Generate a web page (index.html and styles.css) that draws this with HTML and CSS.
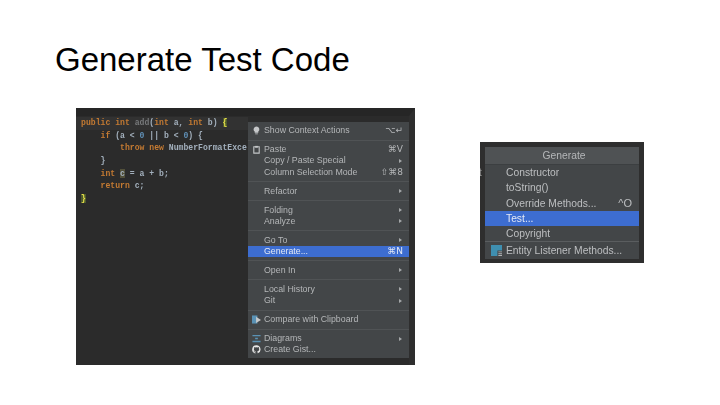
FILE: index.html
```html
<!DOCTYPE html>
<html lang="en">
<head>
<meta charset="utf-8">
<title>Generate Test Code</title>
<link rel="stylesheet" href="styles.css">
</head>
<body>
<main class="slide">
  <h1 class="title">Generate Test Code</h1>
  <div class="shots">
    <section class="shot ide">
      <div class="code">
        <div class="line current"><span class="kw">public int</span> <span class="dim">add</span>(<span class="kw">int</span> a, <span class="kw">int</span> b) <span class="brace">{</span></div>
        <div class="line in1"><span class="kw">if</span> (a &lt; <span class="num">0</span> || b &lt; <span class="num">0</span>) {</div>
        <div class="line in2"><span class="kw">throw new</span> NumberFormatExce</div>
        <div class="line in1">}</div>
        <div class="line in1"><span class="kw">int</span> <span class="mark">c</span> = a + b;</div>
        <div class="line in1"><span class="kw">return</span> c;</div>
        <div class="line"><span class="brace">}</span></div>
      </div>
      <nav class="menu">
        <div class="item"><svg class="icon" viewBox="0 0 10 10"><path class="fill-light" d="M5 .5a3.2 3.2 0 0 0-2 5.7V7.500h4V6.200A3.200 3.200 0 0 0 5 .5zM3.500 8.200h3v1h-3z"/></svg><span class="label">Show Context Actions</span><span class="key">⌥↵</span></div>
        <div class="sep"></div>
        <div class="item"><svg class="icon" viewBox="0 0 10 10"><path class="stroke-light" d="M2 2h6v7H2z"/><path class="fill-light" d="M3.500 1h3v2h-3z"/></svg><span class="label">Paste</span><span class="key">⌘V</span></div>
        <div class="item"><span class="label">Copy / Paste Special</span><span class="arrow"></span></div>
        <div class="item"><span class="label">Column Selection Mode</span><span class="key">⇧⌘8</span></div>
        <div class="sep"></div>
        <div class="item"><span class="label">Refactor</span><span class="arrow"></span></div>
        <div class="sep"></div>
        <div class="item"><span class="label">Folding</span><span class="arrow"></span></div>
        <div class="item"><span class="label">Analyze</span><span class="arrow"></span></div>
        <div class="sep"></div>
        <div class="item"><span class="label">Go To</span><span class="arrow"></span></div>
        <div class="item active"><span class="label">Generate...</span><span class="key">⌘N</span></div>
        <div class="sep"></div>
        <div class="item"><span class="label">Open In</span><span class="arrow"></span></div>
        <div class="sep"></div>
        <div class="item"><span class="label">Local History</span><span class="arrow"></span></div>
        <div class="item"><span class="label">Git</span><span class="arrow"></span></div>
        <div class="sep"></div>
        <div class="item"><svg class="icon" viewBox="0 0 10 10"><path class="fill-blue" d="M0 .5h6v9H0z"/><path class="fill-light" d="M4.500 2 10 5.500 4.500 9z"/></svg><span class="label">Compare with Clipboard</span></div>
        <div class="sep"></div>
        <div class="item"><svg class="icon" viewBox="0 0 10 10"><path class="fill-blue" d="M.5 1h9v1.600h-9zM.5 7.600h9v1.600h-9zM3.500 4.300h3v1.600h-3z"/></svg><span class="label">Diagrams</span><span class="arrow"></span></div>
        <div class="item"><svg class="icon" viewBox="0 0 10 10"><path class="fill-white" d="M5 .4a4.600 4.600 0 0 0-1.500 9c.2 0 .3-.1.3-.3V8c-1.200.3-1.500-.5-1.500-.5-.2-.5-.5-.7-.5-.7-.4-.3 0-.3 0-.3.5 0 .7.5.7.5.4.7 1.100.5 1.400.4 0-.3.200-.5.300-.6-1-.1-2.100-.5-2.100-2.200 0-.5.200-.9.500-1.200-.1-.100-.2-.6 0-1.200 0 0 .4-.1 1.300.5a4.400 4.400 0 0 1 2.300 0c.9-.6 1.300-.5 1.300-.5.200.6.100 1.100 0 1.200.3.300.5.700.5 1.200 0 1.700-1.100 2.100-2.100 2.200.2.100.3.400.3.800v1.400c0 .2.100.3.300.3A4.600 4.600 0 0 0 5 .4z"/></svg><span class="label">Create Gist...</span></div>
      </nav>
    </section>
    <section class="shot gen">
      <div class="edge"><span class="edge-t">t</span></div>
      <nav class="popup">
        <div class="popup-head">Generate</div>
        <div class="row">Constructor</div>
        <div class="row">toString()</div>
        <div class="row"><span class="label">Override Methods...</span><span class="row-key">^O</span></div>
        <div class="row active">Test...</div>
        <div class="row">Copyright</div>
        <div class="popup-sep"></div>
        <div class="row entity"><svg class="entity-icon" viewBox="0 0 12 12"><path class="fill-teal" d="M0 0h12v6H7v6H0z"/><path class="fill-grey" d="M8 7h4v1H8zM8 9h4v1H8zM8 11h4v1H8z"/></svg>Entity Listener Methods...</div>
      </nav>
    </section>
  </div>
</main>
</body>
</html>
```
FILE: styles.css
```css
* { box-sizing: border-box; }
html, body { margin: 0; padding: 0; background: #fff; }
.slide { width: 720px; height: 405px; overflow: hidden; background: #fff; display: flex; flex-direction: column; }
.title { margin: 41px 0 0 55px; height: 37px; font: 400 33px/37px "Liberation Sans", Arial, sans-serif; color: #000; }
.shots { display: flex; align-items: flex-start; margin: 30px 0 0 76px; gap: 65px; }
.shot { background: #2b2b2b; filter: blur(.5px); }
.ide { width: 339px; height: 257px; display: flex; border-top: 8px solid #262626; border-right: 6px solid #2e2e2e; }
.code { width: 172px; flex: none; overflow: hidden; padding-top: 1px; font: 700 8.15px/12.7px "Liberation Mono", "DejaVu Sans Mono", monospace; color: #a3b0bd; }
.line { height: 12.7px; padding-left: 5px; white-space: pre; }
.current { background: #323232; margin-right: -4px; }
.in1 { padding-left: 24.5px; }
.in2 { padding-left: 44px; }
.kw { color: #c47a32; }
.num { color: #5f8eb4; }
.dim { color: #77797b; }
.brace { background: #4d5a2c; color: #e8e04a; }
.mark { background: #52503a; }
.menu { width: 161px; margin-top: 6px; height: 236px; padding: 3.2px 0 3px; background: #434648; font: 8.8px/11.2px "Liberation Sans", Arial, sans-serif; color: #b5b7b9; flex: none; }
.item { height: 11.2px; display: flex; align-items: center; padding: 0 6px 0 16px; position: relative; white-space: nowrap; }
.label { flex: 1; }
.key { font: 9px/11px "DejaVu Sans", sans-serif; color: #b5b7b9; }
.arrow { width: 0; height: 0; margin-right: 1px; border-left: 3px solid #a5a7a9; border-top: 2px solid transparent; border-bottom: 2px solid transparent; }
.sep { height: 7.8px; position: relative; }
.sep::after { content: ""; display: block; height: 1px; position: relative; top: 3.4px; background: #505355; }
.active { background: #3d6dd0; color: #e4e9f5; }
.active .key { color: #e4e9f5; }
.icon { position: absolute; left: 4px; top: 1px; width: 9px; height: 9px; }
.fill-light { fill: #c5c7c9; }
.stroke-light { fill: none; stroke: #c5c7c9; stroke-width: 1.200; }
.fill-blue { fill: #5a92b5; }
.fill-white { fill: #e6e6e6; }
.fill-teal { fill: #3f8fb0; }
.fill-grey { fill: #b0b2b4; }
.gen { width: 164px; height: 121px; margin-top: 34px; display: flex; padding: 5px 5px 4px 0; background: #2e2e2e; }
.edge { width: 5px; flex: none; overflow: hidden; padding-top: 20px; font: 10px/12px "Liberation Sans", Arial, sans-serif; color: #9a9a9a; }
.edge-t { margin-left: -1px; }
.popup { flex: 1; background: #434648; font: 10.3px/15.3px "Liberation Sans", Arial, sans-serif; color: #bdbfc1; }
.popup-head { height: 18px; line-height: 17px; padding-left: 4px; text-align: center; background: #4f5254; color: #b5b7b9; border-bottom: 1px solid #3c3f41; }
.row { height: 15.3px; padding: 0 7px 0 21px; display: flex; white-space: nowrap; }
.row-key { font-size: 11px; }
.popup-sep { height: 1px; margin: 0 0 1px; background: #5a5d5f; }
.entity { position: relative; }
.entity-icon { position: absolute; left: 6px; top: 2px; width: 11px; height: 11px; }
```
